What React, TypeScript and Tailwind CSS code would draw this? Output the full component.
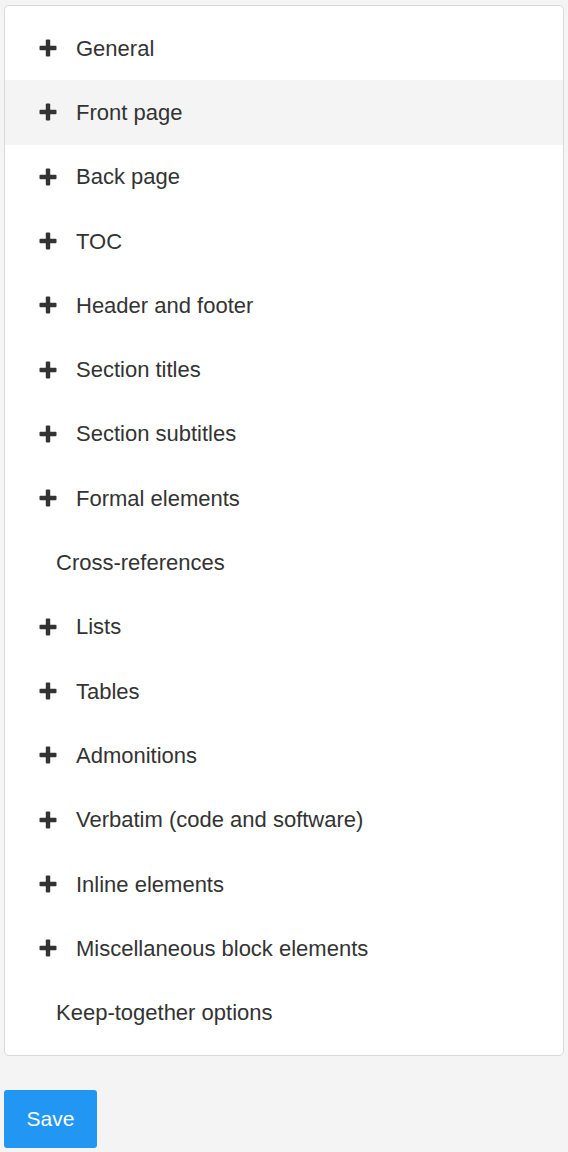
import React from 'react';

const items: { label: string; expandable: boolean; active?: boolean }[] = [
  { label: 'General', expandable: true },
  { label: 'Front page', expandable: true, active: true },
  { label: 'Back page', expandable: true },
  { label: 'TOC', expandable: true },
  { label: 'Header and footer', expandable: true },
  { label: 'Section titles', expandable: true },
  { label: 'Section subtitles', expandable: true },
  { label: 'Formal elements', expandable: true },
  { label: 'Cross-references', expandable: false },
  { label: 'Lists', expandable: true },
  { label: 'Tables', expandable: true },
  { label: 'Admonitions', expandable: true },
  { label: 'Verbatim (code and software)', expandable: true },
  { label: 'Inline elements', expandable: true },
  { label: 'Miscellaneous block elements', expandable: true },
  { label: 'Keep-together options', expandable: false },
];

function PlusIcon() {
  return (
    <svg width="18" height="18" viewBox="0 0 18 18" className="shrink-0">
      <rect x="6.8" y="0.5" width="4.4" height="17" rx="1" fill="#333" />
      <rect x="0.5" y="6.8" width="17" height="4.4" rx="1" fill="#333" />
    </svg>
  );
}

export default function App() {
  return (
    <div
      className="min-h-[1152px] bg-[#f4f4f4] px-1 pt-[5px]"
      style={{ fontFamily: '"Liberation Sans", Arial, sans-serif' }}
    >
      <div className="w-[560px] rounded-[5px] border border-[#d9d9d9] bg-white pt-[10px] pb-[10px]">
        {items.map((item) => (
          <div
            key={item.label}
            className={`flex h-[64.3px] items-center pl-[34px] text-[22px] text-[#333] ${
              item.active ? 'bg-[#f4f4f4]' : ''
            }`}
          >
            {item.expandable ? (
              <>
                <PlusIcon />
                <span className="ml-[19px]">{item.label}</span>
              </>
            ) : (
              <span className="ml-[17px]">{item.label}</span>
            )}
          </div>
        ))}
      </div>
      <button className="mt-[34px] flex h-[58px] w-[93px] items-center justify-center rounded-[3px] bg-[#2196f3] text-[21px] text-white">
        Save
      </button>
    </div>
  );
}
